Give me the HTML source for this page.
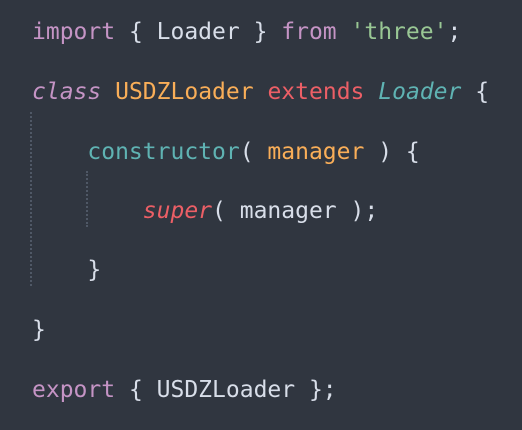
<!DOCTYPE html>
<html><head><meta charset="utf-8"><style>
html,body{margin:0;padding:0;background:#303640;width:522px;height:430px;overflow:hidden}
.c{position:absolute;left:32px;top:0;font-family:"DejaVu Sans Mono","Liberation Mono",monospace;font-size:23px;color:#d8dee9;white-space:pre}
.l{position:absolute;left:0;height:60px;line-height:60px}
.k{color:#c594c5}.o{color:#f9ae58}.r{color:#ec5f66}.t{color:#5fb3b3}.s{color:#99c794}.i{font-style:italic}
.g{position:absolute;width:0;border-left:2px dotted #4f5866}
</style></head><body>
<div class="g" style="left:30px;top:112px;height:174px"></div>
<div class="g" style="left:86px;top:171px;height:56px"></div>
<div class="c">
<div class="l" style="top:2px"><span class="k">import</span> { Loader } <span class="k">from</span> <span class="s">'three'</span>;</div>
<div class="l" style="top:62px"><span class="k i">class</span> <span class="o">USDZLoader</span> <span class="r">extends</span> <span class="t i">Loader</span> {</div>
<div class="l" style="top:122px">    <span class="t">constructor</span>( <span class="o">manager</span> ) {</div>
<div class="l" style="top:181px">        <span class="r i">super</span>( manager );</div>
<div class="l" style="top:240px">    }</div>
<div class="l" style="top:300px">}</div>
<div class="l" style="top:360px"><span class="k">export</span> { USDZLoader };</div>
</div>
</body></html>
